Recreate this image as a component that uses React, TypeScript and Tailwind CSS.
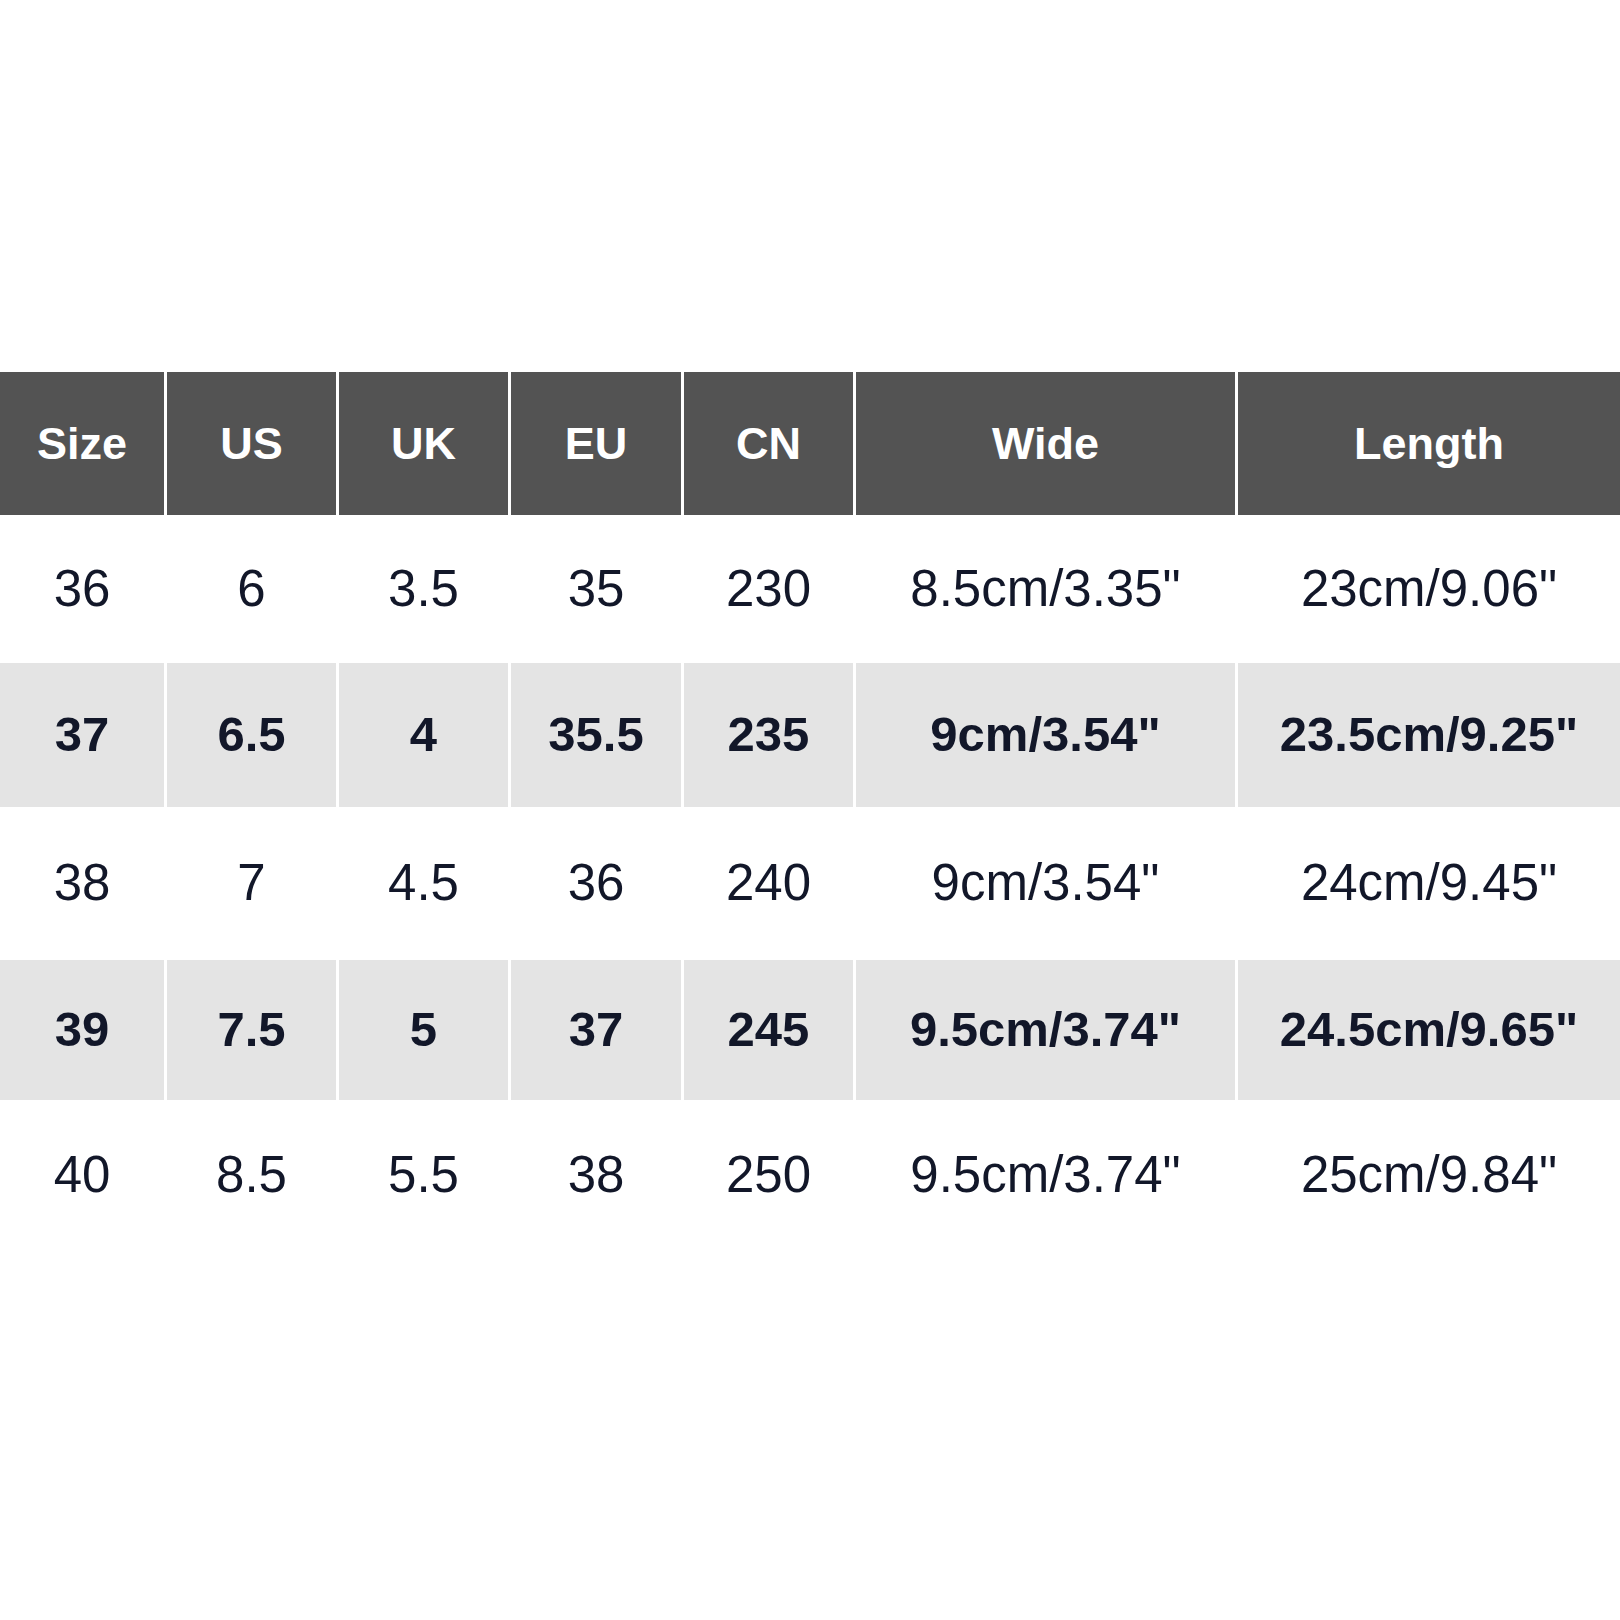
const headers = ["Size", "US", "UK", "EU", "CN", "Wide", "Length"];

const rows = [
    { h: "h-[148px]", shaded: false, cells: ["36", "6", "3.5", "35", "230", "8.5cm/3.35\"", "23cm/9.06\""] },
    { h: "h-[144px]", shaded: true, cells: ["37", "6.5", "4", "35.5", "235", "9cm/3.54\"", "23.5cm/9.25\""] },
    { h: "h-[153px]", shaded: false, cells: ["38", "7", "4.5", "36", "240", "9cm/3.54\"", "24cm/9.45\""] },
    { h: "h-[140px]", shaded: true, cells: ["39", "7.5", "5", "37", "245", "9.5cm/3.74\"", "24.5cm/9.65\""] },
    { h: "h-[150px]", shaded: false, cells: ["40", "8.5", "5.5", "38", "250", "9.5cm/3.74\"", "25cm/9.84\""] },
];

const cols = "grid grid-cols-[164px_169px_169px_170px_169px_379px_1fr] gap-x-[3px]";

export default function App() {
    return (
        <div className="w-[1620px] h-[1620px] bg-white pt-[372px] font-['Liberation_Sans',Arial,sans-serif]">
            {/* Header */}
            <div className={`${cols} h-[143px]`}>
                {headers.map((h) => (
                    <div key={h} className="bg-[#535353] flex items-center justify-center text-white font-bold text-[45px]">
                        {h}
                    </div>
                ))}
            </div>

            {/* Body */}
            {rows.map((row, i) => (
                <div key={i} className={`${cols} ${row.h}`}>
                    {row.cells.map((c, j) => (
                        <div
                            key={j}
                            className={
                                row.shaded
                                    ? "bg-[#e4e4e4] flex items-center justify-center text-[#121729] font-bold text-[49px]"
                                    : "flex items-center justify-center text-[#121729] text-[51px]"
                            }
                        >
                            {c}
                        </div>
                    ))}
                </div>
            ))}
        </div>
    );
}
